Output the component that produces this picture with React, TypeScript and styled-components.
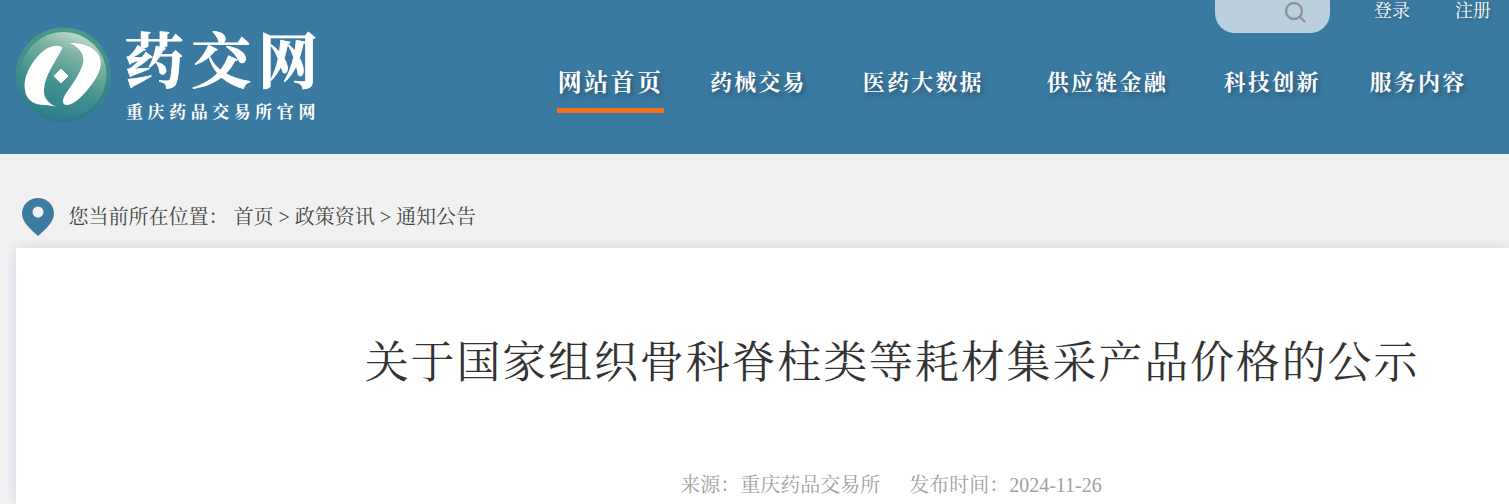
import React from "react";
import styled, { createGlobalStyle } from "styled-components";

const serif = `"Liberation Serif", "Noto Serif CJK SC", "Noto Sans CJK SC", serif`;

const Global = createGlobalStyle`
  html, body { margin: 0; padding: 0; height: 504px; overflow: hidden; background: #f1f1f1; font-family: ${serif}; }
`;

const Header = styled.header`
  height: 154px;
  background: #3b7aa0;
  display: flex;
  justify-content: space-between;
`;
const Logo = styled.div`
  display: flex;
  gap: 9px;
  padding: 27px 0 0 16px;
  color: #fff;
`;
const LogoWords = styled.div`
  display: flex;
  flex-direction: column;
  margin-left: 3px;
  padding-top: 2px;
`;
const LogoName = styled.div`
  font-size: 60px;
  line-height: 68px;
  font-weight: 700;
  letter-spacing: 7px;
  white-space: nowrap;
  -webkit-text-stroke: 0.8px #fff;
`;
const LogoSub = styled.div`
  font-size: 17px;
  line-height: 20px;
  margin-top: 6px;
  margin-left: 2px;
  font-weight: 700;
  letter-spacing: 4.55px;
  white-space: nowrap;
`;
const Right = styled.div`
  display: flex;
  flex-direction: column;
  width: 952px;
`;
const TopBar = styled.div`
  height: 33px;
  display: flex;
  align-items: flex-start;
  padding-left: 658px;
`;
const Search = styled.div`
  width: 115px;
  height: 33px;
  margin-right: -1px;
  background: #bbd0df;
  border-radius: 0 0 20px 20px;
  display: flex;
  justify-content: flex-end;
  align-items: flex-start;
  padding: 1px 24px 0 0;
  box-sizing: border-box;
  flex: none;
`;
const TopLink = styled.a`
  margin-left: 45px;
  color: #fff;
  font-size: 18px;
  line-height: 22px;
  white-space: nowrap;
  flex: none;
  text-shadow: 1px 2px 3px rgba(0, 0, 0, 0.25);
`;
const Nav = styled.nav`
  display: flex;
  align-items: flex-start;
  margin-top: 32px;
`;
const NavItem = styled.a<{ $active?: boolean; $left: number }>`
  margin-left: ${p => p.$left}px;
  flex: none;
  height: 48px;
  box-sizing: border-box;
  color: #fff;
  white-space: nowrap;
  font-size: ${p => (p.$active ? 24 : 22)}px;
  line-height: 36px;
  letter-spacing: ${p => (p.$active ? 2.4 : 2.2)}px;
  font-weight: 700;
  text-align: center;
  width: ${p => (p.$active ? "107px" : "auto")};
  border-bottom: ${p => (p.$active ? "5px solid #f2711c" : "0")};
  text-shadow: 2px 3px 5px rgba(0, 30, 60, 0.4);
`;
const Crumbs = styled.div`
  height: 94px;
  box-sizing: border-box;
  display: flex;
  align-items: flex-start;
  padding: 44px 0 0 22px;
  color: #444;
  font-size: 20px;
  line-height: 38px;
  white-space: nowrap;
`;
const Pin = styled.svg`
  width: 32px;
  height: 38px;
  margin-right: 14.5px;
  flex: none;
`;
const CrumbPath = styled.span`
  margin-left: 5px;
`;
const Card = styled.main`
  margin-left: 16px;
  height: 256px;
  background: #fff;
  box-shadow: 0 0 12px rgba(130, 160, 200, 0.3);
  text-align: center;
  padding: 88px 0 0 257px;
  box-sizing: border-box;
`;
const Title = styled.h1`
  margin: 0;
  padding-left: 2px;
  font-size: 44px;
  line-height: 56px;
  font-weight: 400;
  letter-spacing: 1.85px;
  color: #333;
`;
const Meta = styled.div`
  margin-top: 81px;
  font-size: 20px;
  line-height: 24px;
  color: #a2a2a2;
  display: flex;
  justify-content: center;
  gap: 29px;
`;

const navItems = [
  { t: "网站首页", left: 0, active: true },
  { t: "药械交易", left: 46 },
  { t: "医药大数据", left: 56 },
  { t: "供应链金融", left: 63 },
  { t: "科技创新", left: 56 },
  { t: "服务内容", left: 49 },
];

export default function App() {
  return (
    <>
      <Global />
      <Header>
        <Logo>
          <svg width="96" height="96" viewBox="0 0 96 96">
            <defs>
              <linearGradient id="lg" x1="0.75" y1="0" x2="0.35" y2="1">
                <stop offset="0" stopColor="#c9e0d4" />
                <stop offset="0.28" stopColor="#7bb0a2" />
                <stop offset="0.65" stopColor="#40908f" />
                <stop offset="1" stopColor="#2e7f8d" />
              </linearGradient>
              <linearGradient id="rim" x1="0.5" y1="0" x2="0.5" y2="1">
                <stop offset="0" stopColor="#4f9a85" />
                <stop offset="1" stopColor="#2a7c8c" />
              </linearGradient>
            </defs>
            <circle cx="47.5" cy="48" r="47.5" fill="url(#rim)" />
            <circle cx="47.5" cy="48" r="43" fill="url(#lg)" />
            <path d="M46 20 C38 16 28 22 22 29 C12 40 7 53 9 63 C10 74 20 78 28 78 C33 78 38 79 41 80 C33 77 27 71 28 62 C29 48 40 34 46 22 Z" fill="#fff" />
            <path d="M54 16 C64 16 76 18 82 27 C88 36 84 46 76 57 C68 68 58 78 51 78 C46 78 46 73 49 68 C54 60 64 48 67 36 C69 26 62 20 54 16 Z" fill="#fff" />
            <path d="M45 42 L52 49 L45 56 L38 49 Z" fill="#fff" stroke="#fff" strokeWidth="1" strokeLinejoin="round" />
          </svg>
          <LogoWords>
            <LogoName>药交网</LogoName>
            <LogoSub>重庆药品交易所官网</LogoSub>
          </LogoWords>
        </Logo>
        <Right>
          <TopBar>
            <Search>
              <svg width="22" height="22" viewBox="0 0 22 22" fill="none" stroke="#8f9296" strokeWidth="2.4">
                <circle cx="10" cy="10" r="8" />
                <path d="M16 16 L20.5 20.5" strokeLinecap="round" />
              </svg>
            </Search>
            <TopLink>登录</TopLink>
            <TopLink>注册</TopLink>
          </TopBar>
          <Nav>
            {navItems.map(n => (
              <NavItem key={n.t} $left={n.left} $active={n.active}>{n.t}</NavItem>
            ))}
          </Nav>
        </Right>
      </Header>
      <Crumbs>
        <Pin viewBox="0 0 32 38">
          <path d="M16 0 C7 0 0 7 0 15.5 C0 24 8 31 16 38 C24 31 32 24 32 15.5 C32 7 25 0 16 0 Z" fill="#3d7ca1" />
          <circle cx="16" cy="14" r="5.5" fill="#f1f1f1" />
        </Pin>
        您当前所在位置：
        <CrumbPath>首页 &gt; 政策资讯 &gt; 通知公告</CrumbPath>
      </Crumbs>
      <Card>
        <Title>关于国家组织骨科脊柱类等耗材集采产品价格的公示</Title>
        <Meta>
          <span>来源：重庆药品交易所</span>
          <span>发布时间：2024-11-26</span>
        </Meta>
      </Card>
    </>
  );
}
